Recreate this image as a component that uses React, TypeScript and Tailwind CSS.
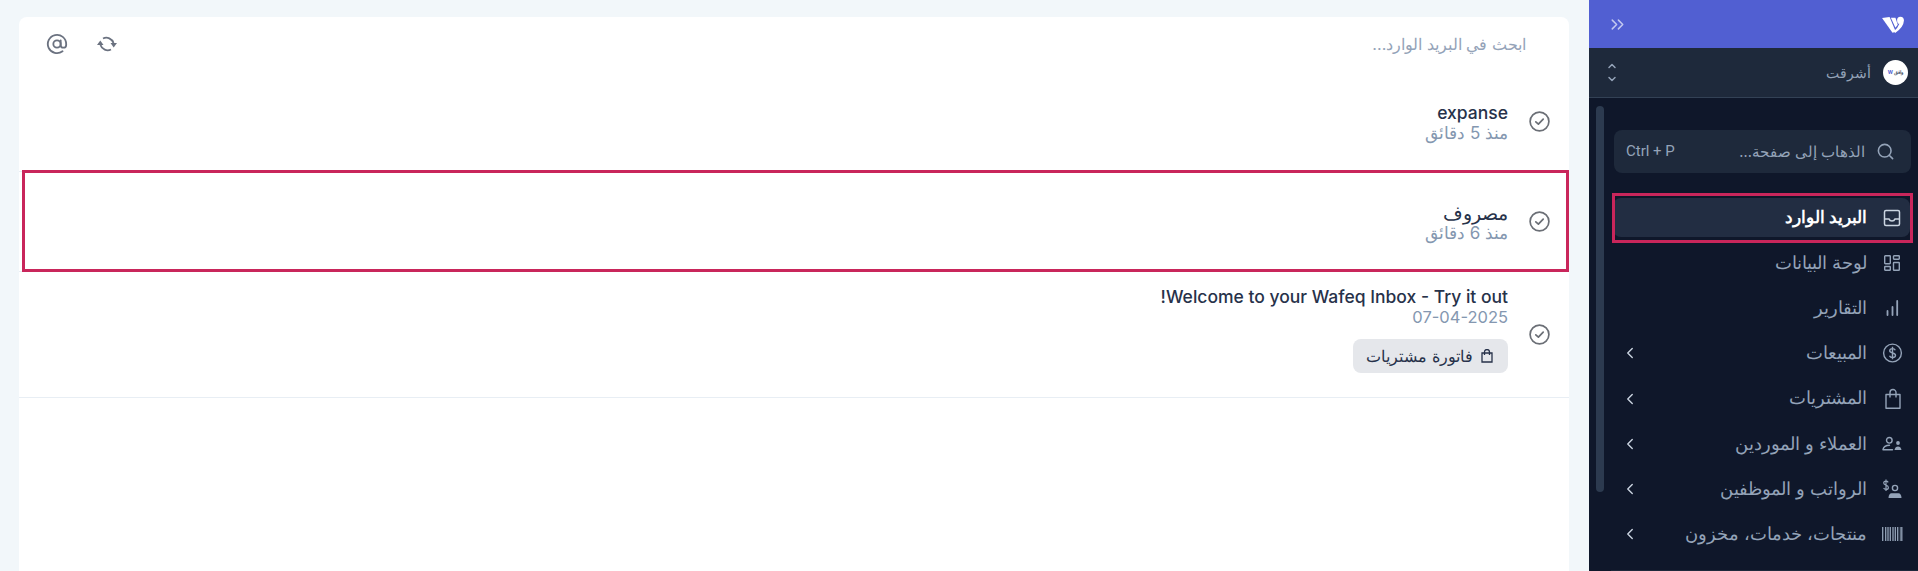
import React from "react";
import { ChevronLeft, ChevronsRight, Search, ChevronUp, ChevronDown, AtSign } from "lucide-react";

const CheckCircle = () => (
  <svg width="21" height="21" viewBox="0 0 21 21" fill="none" stroke="#6b6f76" strokeWidth="1.7" strokeLinecap="round" strokeLinejoin="round" className="shrink-0">
    <circle cx="10.5" cy="10.5" r="9.4" />
    <path d="M6.800 10.800 9.400 13.200 14.200 8.200" />
  </svg>
);

const Ic = ({ children }: { children: React.ReactNode }) => (
  <svg width="20" height="20" viewBox="0 0 20 20" fill="none" stroke="currentColor" strokeWidth="1.4" className="shrink-0 overflow-visible">
    {children}
  </svg>
);

const items: { label: string; icon: React.ReactNode; chevron?: boolean }[] = [
  { label: "لوحة البيانات", icon: <Ic><rect x="2.700" y="2.700" width="5.600" height="8" rx=".6"/><rect x="11.500" y="2.700" width="5.800" height="3.500" rx=".6"/><rect x="2.700" y="13.500" width="5.600" height="3.800" rx=".6"/><rect x="11.500" y="9.500" width="5.800" height="7.800" rx=".6"/></Ic> },
  { label: "التقارير", icon: <Ic><path d="M5.500 13v4M10.500 9v8M15.200 3v14" strokeWidth="1.800" strokeLinecap="round"/></Ic> },
  { label: "المبيعات", chevron: true, icon: <Ic><circle cx="10.500" cy="10" r="8.900"/><path d="M13.300 7.300c-.5-1.100-1.500-1.700-2.800-1.700-1.600 0-2.800.9-2.800 2.200 0 2.900 5.800 1.500 5.800 4.500 0 1.300-1.300 2.200-3 2.200-1.400 0-2.500-.6-3-1.800M10.500 3.800v12.400"/></Ic> },
  { label: "المشتريات", chevron: true, icon: <Ic><path d="M4 5.500h14v13.700h-14z" strokeLinejoin="round"/><path d="M8 8.500V3.500a3 3 0 0 1 6 0V8.500"/></Ic> },
  { label: "العملاء و الموردين", chevron: true, icon: <Ic><circle cx="7.300" cy="6.300" r="2.800"/><path d="M1 15.500c.6-3 3.400-4.300 6.500-4.300M1 15.800h9.500" strokeLinecap="round"/><circle cx="16" cy="9" r="1.900" fill="currentColor" stroke="none"/><path d="M12.500 16c.4-2.500 1.800-3.500 3.500-3.500s3.100 1 3.500 3.500z" fill="currentColor" stroke="none"/></Ic> },
  { label: "الرواتب و الموظفين", chevron: true, icon: <Ic><path d="M6.200 3.400C5.700 2.600 4.900 2.200 4 2.200c-1.300 0-2.300.8-2.300 1.900C1.700 6.600 6.400 5.600 6.400 8.400c0 1.200-1 2-2.400 2-1 0-1.900-.5-2.400-1.400M4 .5v11.500" strokeWidth="1.200"/><circle cx="13" cy="9" r="2.600"/><path d="M6.500 19c0-3 1.500-4.800 3-4.800h7c1.500 0 3 1.800 3 4.800z" fill="currentColor" stroke="none"/></Ic> },
  { label: "منتجات، خدمات، مخزون", chevron: true, icon: <Ic><path d="M.7 3v14M3.700 3v14M6 3v14M8.300 3v14M11 3v14M13.300 3v14M15.700 3v14M19.800 3v14" strokeWidth="1.300"/><path d="M18.300 3v14" strokeWidth=".8"/></Ic> },
];

const font = "font-['Inter',sans-serif]";

export default function App() {
  return (
    <div dir="rtl" className={`flex h-[571px] w-[1918px] overflow-hidden bg-[#f2f7fa] ${font}`}>
      {/* Sidebar */}
      <aside className="flex h-full w-[329px] shrink-0 flex-col bg-[#0f172a]">
        <div className="flex h-12 shrink-0 items-center justify-between bg-[#515fd2] pl-[18px] pr-[14px]">
          <svg width="22" height="17" viewBox="0 0 67 52" fill="#fff">
            <path d="M0 6 23 3 42 48 32 51z" />
            <path d="M27 5 41 5 48 27 41 36z" />
            <path d="M46 12Q46 3 56 2 67 2 67 14 66 35 40 52L36 47Q48 38 53 24 46 24 46 12z" />
          </svg>
          <ChevronsRight size={21} strokeWidth={1.700} className="text-[#c3c9f0]" />
        </div>
        <div className="flex h-[50px] shrink-0 items-center justify-between border-b border-[#334155] bg-[#1e293b] pl-[17px] pr-[10px]">
          <div className="flex items-center gap-[12px]">
            <div className="flex size-[25px] items-center justify-center rounded-full bg-white">
              <span className="text-[5px] font-bold leading-none text-[#475569]">وافق <span className="text-[#515fd2]">W</span></span>
            </div>
            <span className="text-[14px] text-[#94a3b8]">أشرقت</span>
          </div>
          <div className="flex flex-col text-[#94a3b8]">
            <ChevronUp size={12} strokeWidth={3} className="mb-[1px]" />
            <ChevronDown size={12} strokeWidth={3} />
          </div>
        </div>
        <div className="relative min-h-0 flex-1">
          <div className="absolute left-[7px] top-[8px] h-[386px] w-2 rounded bg-[#2c3a4f]" />
          <div className="pr-[7px] pt-[32px]">
            <div className="flex h-[43px] w-[297px] items-center justify-between rounded-lg bg-[#1e293b] pl-3 pr-4 text-[#94a3b8]">
              <div className="flex items-center gap-[11px]">
                <Search size={19} strokeWidth={2} />
                <span className="text-[14.500px]">الذهاب إلى صفحة...</span>
              </div>
              <span className="font-['Roboto'] text-[15px]" dir="ltr">Ctrl + P</span>
            </div>
          </div>
          <nav className="mr-[8px] mt-[25px] w-[297px]">
            <div className="relative flex h-[39px] items-center gap-[15px] rounded-lg bg-[#222d42] pr-[8px] text-white">
              <svg width="20" height="20" viewBox="0 0 20 20" fill="none" stroke="#cbd5e1" strokeWidth="1.500" className="shrink-0">
                <rect x="2.500" y="2.500" width="15" height="15" rx="1.500" />
                <path d="M2.500 11h4.500c.5 1.500 1.500 2 3 2s2.500-.5 3-2h4.500" />
              </svg>
              <span className="text-[17px] font-semibold">البريد الوارد</span>
              <div className="pointer-events-none absolute -bottom-[6px] -left-px -right-[3px] -top-[5px] border-[3px] border-[#c9265b]" />
            </div>
            <div className="mt-[3px]">
              {items.map((it) => (
                <div key={it.label} className="flex h-[45.3px] items-center justify-between pl-[8px] pr-[8px] text-[#94a3b8]">
                  <div className="flex items-center gap-[15px]">
                    {it.icon}
                    <span className="text-[17.500px]">{it.label}</span>
                  </div>
                  {it.chevron && <ChevronLeft size={18} strokeWidth={1.800} className="text-[#cbd5e1]" />}
                </div>
              ))}
            </div>
          </nav>
        </div>
        <div className="ml-[22px] h-px shrink-0 bg-[#1e293b]" />
      </aside>

      {/* Main */}
      <main className="min-w-0 flex-1 pl-[19px] pr-5 pt-[17px]">
        <div className="h-[554px] rounded-t-lg bg-white">
          <div className="flex h-[54px] items-center justify-between pl-[27px] pr-[43px]">
            <span className="text-[16.200px] text-[#94a3b8]">ابحث في البريد الوارد...</span>
            <div className="flex items-center gap-[29px] text-[#6b7280]">
              <svg width="20" height="16" viewBox="0 0 20 16" fill="none" stroke="currentColor" strokeWidth="1.800" className="overflow-visible">
                <path d="M6 2.500A7.500 7.500 0 0 1 16.500 7" />
                <path d="M14 13.500A7.500 7.500 0 0 1 3.500 9" />
                <path d="M13.500 7H20L16.700 11.500z" fill="currentColor" stroke="none" />
                <path d="M0 9H6.500L3.300 4.500z" fill="currentColor" stroke="none" />
              </svg>
              <AtSign size={22} strokeWidth={2} />
            </div>
          </div>
          <div className="flex h-[101px] items-center gap-[21px] border-b border-[#e8eef4] pr-[19px]">
            <CheckCircle />
            <div className="mt-[3px]">
              <div className="text-[17.500px] font-medium leading-5 text-[#27324a]">expanse</div>
              <div className="text-[17px] leading-5 text-[#8497b0]">منذ 5 دقائق</div>
            </div>
          </div>
          <div className="relative flex h-[100px] items-center gap-[21px] border-b border-[#e8eef4] pr-[19px]">
            <CheckCircle />
            <div className="mt-[2px]">
              <div className="text-[18.500px] font-medium leading-5 text-[#27324a]">مصروف</div>
              <div className="text-[17px] leading-5 text-[#8497b0]">منذ 6 دقائق</div>
            </div>
            <div className="pointer-events-none absolute -bottom-px -top-[2px] left-[3px] right-0 border-[3px] border-[#c9265b]" />
          </div>
          <div className="flex h-[126px] items-center gap-[21px] border-b border-[#e8eef4] pr-[19px]">
            <CheckCircle />
            <div className="mb-[9px]">
              <div className="text-[17.500px] font-medium leading-5 text-[#27324a]">Welcome to your Wafeq Inbox - Try it out!</div>
              <div className="text-[16.500px] leading-5 text-[#8497b0]">07-04-2025</div>
              <div className="mt-[12px] inline-flex h-[34px] items-center gap-[8px] rounded-lg bg-[#e5e7eb] pl-[13px] pr-[15px] text-[16.200px] text-[#27324a]">
                <svg width="12" height="14" viewBox="0 0 12 14" fill="none" stroke="currentColor" strokeWidth="1.300"><path d="M1 4h10v9H1z" /><path d="M3.500 6V3a2.500 2.500 0 0 1 5 0v3" /></svg>
                فاتورة مشتريات
              </div>
            </div>
          </div>
        </div>
      </main>
    </div>
  );
}
